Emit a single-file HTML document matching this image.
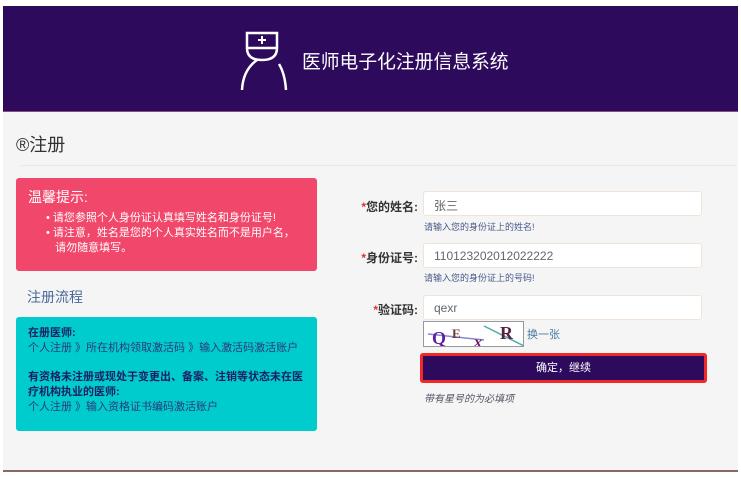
<!DOCTYPE html>
<html><head><meta charset="utf-8"><style>
*{margin:0;padding:0;box-sizing:border-box}
body{width:741px;height:479px;background:#fff;font-family:"Liberation Sans","Noto Sans CJK SC",sans-serif;position:relative;overflow:hidden}
.abs{position:absolute}
#hdr{left:3px;top:6px;width:735px;height:106px;background:#2d0a5c;border-bottom:1px solid #8a4a7a}
#main{left:3px;top:112px;width:735px;height:360px;background:#f5f5f5;border-bottom:2px solid #8a6a5a}
.lbl{font-size:12px;font-weight:bold;color:#333;text-align:right;width:100px;left:318px}
.lbl span{color:#d33}
.inp{left:423px;width:279px;height:25px;background:#fff;border:1px solid #f0e4d8;border-radius:3px;font-size:12px;color:#666;padding:5px 10px}
.hint{left:424px;font-size:9px;color:#4a5a8a}
</style></head><body>
<div id="hdr" class="abs">
<svg class="abs" style="left:236px;top:24px" width="52" height="62" viewBox="0 0 52 62" fill="none" stroke="#fff" stroke-width="2.5">
<path d="M8 3 H38 V18 Q38 30 23 30 Q8 30 8 18 Z" />
<path d="M8 18 H38"/>
<path d="M23 6 V14 M19 10 H27" stroke-width="2"/>
<path d="M18 30 Q4 40 3 60"/>
<path d="M40 34 Q46 44 47 60"/>
</svg>
<div class="abs" style="left:299px;top:41px;color:#fff;font-size:18.8px">医师电子化注册信息系统</div>
</div>
<div id="main" class="abs">
<div class="abs" style="left:13px;top:19px;font-size:18px;color:#333">®注册</div>
<div class="abs" style="left:18px;top:53px;width:715px;height:1px;background:#e8e8e8"></div>
</div>
<div class="abs" style="left:16px;top:178px;width:301px;height:93px;background:#f0476a;border-radius:3px;color:#fff">
<div class="abs" style="left:12px;top:9px;font-size:14px">温馨提示:</div>
<div class="abs" style="left:30px;top:33px;font-size:11px;line-height:15px;width:270px">• 请您参照个人身份证认真填写姓名和身份证号!<br>• 请注意，姓名是您的个人真实姓名而不是用户名，<br>&nbsp;&nbsp;&nbsp;请勿随意填写。</div>
</div>
<div class="abs" style="left:27px;top:287px;font-size:14px;color:#4a6a9a">注册流程</div>
<div class="abs" style="left:16px;top:317px;width:301px;height:114px;background:#00ccce;border-radius:3px;font-size:11px;line-height:15px;color:#2a3a7a;padding:9px 12px">
<b style="color:#1a2060">在册医师:</b><br>个人注册 》所在机构领取激活码 》输入激活码激活账户
<div style="height:14px"></div>
<b style="color:#1a2060">有资格未注册或现处于变更出、备案、注销等状态未在医<br>疗机构执业的医师:</b><br>个人注册 》输入资格证书编码激活账户
</div>
<div class="abs lbl" style="top:198px"><span>*</span>您的姓名:</div>
<div class="abs inp" style="top:191px">张三</div>
<div class="abs hint" style="top:220px">请输入您的身份证上的姓名!</div>
<div class="abs lbl" style="top:249px"><span>*</span>身份证号:</div>
<div class="abs inp" style="top:243px">110123202012022222</div>
<div class="abs hint" style="top:271px">请输入您的身份证上的号码!</div>
<div class="abs lbl" style="top:301px"><span>*</span>验证码:</div>
<div class="abs inp" style="top:295px">qexr</div>
<div class="abs" style="left:423px;top:321px;width:101px;height:26px;background:#fff;border:1px solid #999;overflow:hidden">
<svg width="101" height="26"><path d="M4 12 L60 18" stroke="#88c" stroke-width="1.5"/><path d="M60 4 L100 24" stroke="#5aa" stroke-width="1.5"/>
<text x="8" y="22" font-family="Liberation Serif" font-size="18" fill="#6020a0" font-weight="bold">Q</text>
<text x="28" y="16" font-family="Liberation Serif" font-size="13" fill="#6a3a3a" font-weight="bold">E</text>
<text x="50" y="25" font-family="Liberation Serif" font-size="16" fill="#6a1a6a" font-weight="bold" font-style="italic">x</text>
<text x="76" y="17" font-family="Liberation Serif" font-size="18" fill="#5a2040" font-weight="bold">R</text></svg></div>
<div class="abs" style="left:527px;top:326px;font-size:11px;color:#4a7aa0">换一张</div>
<div class="abs" style="left:420px;top:353px;width:287px;height:30px;border:3px solid #f02828;border-radius:3px;background:#2d0a5c;color:#fff;font-size:11px;text-align:center;line-height:24px">确定，继续</div>
<div class="abs" style="left:424px;top:390px;font-size:10px;color:#556;font-style:italic">带有星号的为必填项</div>
</body></html>
